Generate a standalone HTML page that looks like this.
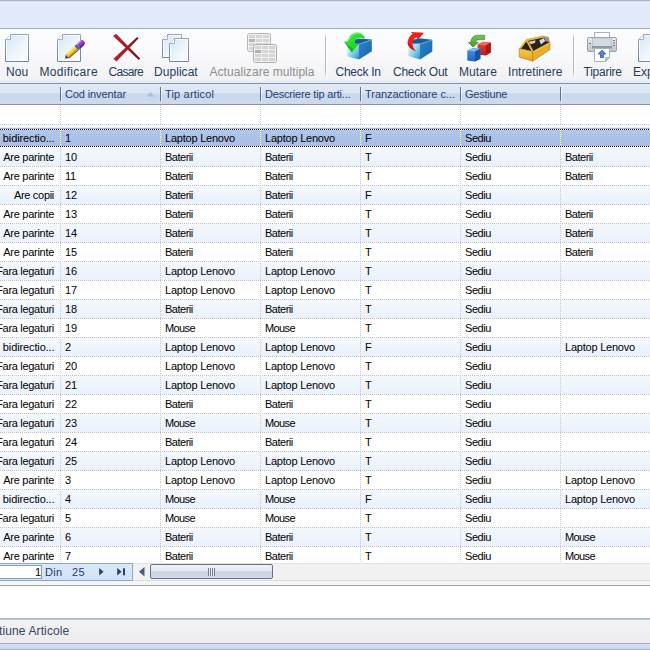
<!DOCTYPE html>
<html><head><meta charset="utf-8"><title>Gestiune Articole</title>
<style>
html,body{margin:0;padding:0;background:#fff;}
body{width:650px;height:650px;overflow:hidden;position:relative;font-family:"Liberation Sans",sans-serif;}
#app{position:absolute;left:0;top:0;width:650px;height:650px;overflow:hidden;background:#fff;}
.abs{position:absolute;}
/* top caption band */
#cap{left:0;top:0;width:650px;height:28px;background:linear-gradient(#a9b6ca 0,#a9b6ca 1px,#d0dcee 1px,#d0dcee 2px,#eaf0fa 2px,#eaf0fa 3px,#e4ecf9 3px,#e1eaf8 5px,#e1eaf8 24px,#e3ebf8 28px);}
#capb{left:0;top:28px;width:650px;height:1px;background:#a3abb9;}
/* toolbar */
#tb{left:0;top:29px;width:650px;height:54px;background:linear-gradient(#fbfcfe 0,#fafafc 20px,#f1f2f4 50px,#eaeef4 52px,#e3e9f2 54px);}
.tsep{top:33px;width:1px;height:45px;background:linear-gradient(rgba(160,164,172,0),#b2b6bd 6px,#b2b6bd 38px,rgba(160,164,172,0));}
.tsep2{top:33px;width:1px;height:45px;background:rgba(255,255,255,.9);}
.tl{position:absolute;top:64px;height:16px;line-height:16px;font-size:12px;color:#2a3a5c;white-space:pre;}
.tl.dis{color:#8d8d8d;}
.ic{position:absolute;overflow:visible;}
/* header */
#hd{left:0;top:83px;width:650px;height:22px;box-sizing:border-box;border-top:1px solid #8493a8;border-bottom:1px solid #8493a8;background:linear-gradient(#e1eaf7 0,#d9e4f4 9px,#c9d7ec 10px,#cddaee 20px);}
.hs{top:87px;width:1px;height:14px;background:#61728f;}
.hs2{top:87px;width:1px;height:14px;background:rgba(255,255,255,.55);}
.ht{position:absolute;top:86px;height:16px;line-height:16px;font-size:11px;color:#24406e;white-space:pre;}
/* grid */
#filt{left:0;top:105px;width:650px;height:19px;background:#fff;}
.hdot{height:1px;background-image:repeating-linear-gradient(to right,#bfbfbf 0,#bfbfbf 1px,rgba(255,255,255,0) 1px,rgba(255,255,255,0) 2px);}
.vdot{width:1px;background-image:repeating-linear-gradient(to bottom,#c9c9c9 0,#c9c9c9 1px,rgba(255,255,255,0) 1px,rgba(255,255,255,0) 2px);}
.row{position:absolute;left:0;width:650px;height:18px;background:#fff;}
.row.alt{background:linear-gradient(#f4f8fd,#eaf1fb);}
.row.sel{background:linear-gradient(#b2c6ea,#a7bde5);}
.c{position:absolute;top:1px;height:16px;line-height:16px;font-size:11px;color:#000;white-space:pre;}
.c.r{text-align:right;}
.fdot{position:absolute;left:0;width:650px;height:1px;background-image:repeating-linear-gradient(to right,#000 0,#000 1px,#fff 1px,#fff 2px);}
</style></head><body><div id="app">

<div id="cap" class="abs"></div><div id="capb" class="abs"></div><div id="tb" class="abs"></div>
<div class="abs tsep" style="left:325px"></div><div class="abs tsep2" style="left:326px"></div>
<div class="abs tsep" style="left:573px"></div><div class="abs tsep2" style="left:574px"></div>
<span class="tl" style="left:6px;letter-spacing:0.05px">Nou</span>
<span class="tl" style="left:39.5px;letter-spacing:0.3px">Modificare</span>
<span class="tl" style="left:108.5px;letter-spacing:-0.7px">Casare</span>
<span class="tl" style="left:154px;letter-spacing:0.05px">Duplicat</span>
<span class="tl dis" style="left:209.5px;letter-spacing:0.05px">Actualizare multipla</span>
<span class="tl" style="left:335.5px;letter-spacing:-0.27px">Check In</span>
<span class="tl" style="left:393px;letter-spacing:-0.25px">Check Out</span>
<span class="tl" style="left:459px;letter-spacing:0.1px">Mutare</span>
<span class="tl" style="left:508px;letter-spacing:0.05px">Intretinere</span>
<span class="tl" style="left:583.5px;letter-spacing:-0.25px">Tiparire</span>
<span class="tl" style="left:633px;letter-spacing:0px">Export</span>
<svg class="ic" style="left:0;top:29px" width="650" height="54" viewBox="0 29 650 54">
<defs>
<linearGradient id="pg" x1="0" y1="0" x2="1" y2="1"><stop offset="0" stop-color="#d3e4f6"/><stop offset=".55" stop-color="#eef5fc"/><stop offset="1" stop-color="#fdfeff"/></linearGradient>
<linearGradient id="pgs" x1="0" y1="0" x2="0" y2="1"><stop offset="0" stop-color="#98a5b5"/><stop offset="1" stop-color="#74849a"/></linearGradient>
<linearGradient id="boxl" x1="0" y1="0" x2="1" y2="1"><stop offset="0" stop-color="#e9fbff"/><stop offset=".5" stop-color="#8fd6ee"/><stop offset="1" stop-color="#2b8fc6"/></linearGradient>
<linearGradient id="boxr" x1="0" y1="0" x2="1" y2="1"><stop offset="0" stop-color="#2f86cc"/><stop offset="1" stop-color="#1562a6"/></linearGradient>
<linearGradient id="boxt" x1="0" y1="0" x2="0" y2="1"><stop offset="0" stop-color="#1d62a8"/><stop offset="1" stop-color="#134f90"/></linearGradient>
<linearGradient id="grn" x1="0" y1="0" x2="1" y2="1"><stop offset="0" stop-color="#3ff03f"/><stop offset="1" stop-color="#12c41c"/></linearGradient>
<linearGradient id="grn2" x1="0" y1="0" x2="0" y2="1"><stop offset="0" stop-color="#7bc65a"/><stop offset="1" stop-color="#3d9a2a"/></linearGradient>
<linearGradient id="red" x1="0" y1="0" x2="1" y2="1"><stop offset="0" stop-color="#ff2a1a"/><stop offset="1" stop-color="#d40808"/></linearGradient>
<linearGradient id="cb" x1="0" y1="0" x2="0" y2="1"><stop offset="0" stop-color="#4d97e6"/><stop offset="1" stop-color="#1f63bd"/></linearGradient>
<linearGradient id="cr" x1="0" y1="0" x2="0" y2="1"><stop offset="0" stop-color="#e8493c"/><stop offset="1" stop-color="#b8201a"/></linearGradient>
<linearGradient id="yl" x1="0" y1="0" x2="0" y2="1"><stop offset="0" stop-color="#f8cf4c"/><stop offset="1" stop-color="#e2a21c"/></linearGradient>
<linearGradient id="pr" x1="0" y1="0" x2="0" y2="1"><stop offset="0" stop-color="#eceff3"/><stop offset=".5" stop-color="#cfd5dc"/><stop offset="1" stop-color="#bec6cf"/></linearGradient>
<linearGradient id="gg" x1="0" y1="0" x2="0" y2="1"><stop offset="0" stop-color="#ebebeb"/><stop offset="1" stop-color="#dcdcdc"/></linearGradient>


</defs>
<!-- Nou -->
<g transform="translate(5,34)"><path d="M5.5 0.5 H23.5 V27.5 H0.5 V5.5 Z" fill="url(#pg)" stroke="url(#pgs)" stroke-width="1"/><path d="M6.2 1.5 H22.5 V26.5 H1.5 V6.2" fill="none" stroke="#fff" stroke-opacity=".75" stroke-width="1"/><path d="M0.5 5.5 H5.5 V0.5" fill="#fbfdff" stroke="#a3afbd" stroke-width="1"/></g>
<!-- Modificare -->
<g transform="translate(57,34)"><path d="M5.5 0.5 H23.5 V27.5 H0.5 V5.5 Z" fill="url(#pg)" stroke="url(#pgs)" stroke-width="1"/><path d="M6.2 1.5 H22.5 V26.5 H1.5 V6.2" fill="none" stroke="#fff" stroke-opacity=".75" stroke-width="1"/><path d="M0.5 5.5 H5.5 V0.5" fill="#fbfdff" stroke="#a3afbd" stroke-width="1"/></g>
<g transform="translate(65.3,58.2) rotate(-42.6)">
 <path d="M0 0 L3.2 -2.2 L3.2 2.2 Z" fill="#4e4428"/>
 <path d="M2.6 -2 L4.5 -2.7 H15 V2.7 H4.5 L2.6 2 Z" fill="#f2cd38"/>
 <path d="M2.6 0.8 H15 V2.7 H4.5 L2.6 2 Z" fill="#c4951a"/>
 <path d="M4 -2.7 H15 V-1.5 H4 Z" fill="#fcec98"/>
 <path d="M15 -2.7 H17.8 V2.7 H15 Z" fill="#4f5fb0"/>
 <path d="M17.8 -2.7 H22.6 A2.7 2.7 0 0 1 22.6 2.7 H17.8 Z" fill="#9c3cc6"/>
 <path d="M17.8 -2.7 H22.6 A2.7 2.7 0 0 1 24.6 -1.5 H17.8 Z" fill="#d88cf0"/>
 <path d="M17.8 1 H25.1 A2.7 2.7 0 0 1 22.6 2.7 H17.8 Z" fill="#642888"/>
 <path d="M0 0 L3.2 2.3 L15 2.9 L22.6 2.9" fill="none" stroke="#2e2a44" stroke-width=".8" opacity=".75"/>
 <path d="M0 0 L3.2 -2.3" fill="none" stroke="#2e2a44" stroke-width=".6" opacity=".6"/>
</g>
<!-- Casare -->
<linearGradient id="x1" gradientUnits="userSpaceOnUse" x1="114" y1="35" x2="139" y2="59"><stop offset="0" stop-color="#b52430"/><stop offset=".55" stop-color="#a01c28"/><stop offset="1" stop-color="#5e141c"/></linearGradient>
<linearGradient id="x2" gradientUnits="userSpaceOnUse" x1="115" y1="60" x2="138" y2="37.5"><stop offset="0" stop-color="#b52430"/><stop offset=".55" stop-color="#a01c28"/><stop offset="1" stop-color="#5e141c"/></linearGradient>
<path d="M113 36 L116.1 33.7 L140.1 58.6 L138.8 60 Z" fill="url(#x1)"/>
<path d="M113.4 58.7 L116.5 61.5 L138.6 38.3 L137.2 37 Z" fill="url(#x2)"/>
<!-- Duplicat -->
<g transform="translate(162,34)"><path d="M5.5 0.5 H19.5 V23.5 H0.5 V5.5 Z" fill="url(#pg)" stroke="url(#pgs)" stroke-width="1"/><path d="M6.2 1.5 H18.5 V22.5 H1.5 V6.2" fill="none" stroke="#fff" stroke-opacity=".75" stroke-width="1"/><path d="M0.5 5.5 H5.5 V0.5" fill="#fbfdff" stroke="#a3afbd" stroke-width="1"/></g>
<g transform="translate(169,38)"><path d="M5.5 0.5 H19.5 V23.5 H0.5 V5.5 Z" fill="url(#pg)" stroke="url(#pgs)" stroke-width="1"/><path d="M6.2 1.5 H18.5 V22.5 H1.5 V6.2" fill="none" stroke="#fff" stroke-opacity=".75" stroke-width="1"/><path d="M0.5 5.5 H5.5 V0.5" fill="#fbfdff" stroke="#a3afbd" stroke-width="1"/></g>
<!-- Actualizare multipla (disabled) -->
<g>
<rect x="247.5" y="33.5" width="23" height="18" rx="2" fill="#f2f2f2" stroke="#b5b5b5"/>
<g fill="#d6d6d6"><rect x="249" y="35" width="6" height="3"/><rect x="256" y="35" width="6" height="3"/><rect x="263" y="35" width="6" height="3"/>
<rect x="256" y="39" width="6" height="3"/><rect x="263" y="39" width="6" height="3"/>
<rect x="249" y="43" width="6" height="3"/><rect x="256" y="43" width="6" height="3"/><rect x="263" y="43" width="6" height="3"/>
<rect x="249" y="47" width="6" height="3"/><rect x="256" y="47" width="6" height="3"/><rect x="263" y="47" width="6" height="3"/></g>
<rect x="249" y="39" width="6" height="3" fill="#b4b4b4"/>
<rect x="253.5" y="44.5" width="23" height="18" rx="2" fill="#f2f2f2" stroke="#adadad"/>
<g fill="#d4d4d4"><rect x="255" y="46" width="6" height="3"/><rect x="262" y="46" width="6" height="3"/><rect x="269" y="46" width="6" height="3"/>
<rect x="262" y="50" width="6" height="3"/><rect x="269" y="50" width="6" height="3"/>
<rect x="255" y="54" width="6" height="3"/><rect x="262" y="54" width="6" height="3"/><rect x="269" y="54" width="6" height="3"/>
<rect x="255" y="58" width="6" height="3"/><rect x="262" y="58" width="6" height="3"/><rect x="269" y="58" width="6" height="3"/></g>
<rect x="255" y="50" width="6" height="3" fill="#b0b0b0"/>
</g>
<!-- Check In -->
<g>
<path d="M347.2 44.5 L359 43.8 L359 59.4 L347.6 56.4 Z" fill="url(#boxl)"/>
<path d="M359 43.8 L371.8 39.6 L371.8 51.2 L359 59.4 Z" fill="url(#boxr)"/>
<path d="M347.2 44.5 L353.5 40.3 L358.5 38.6 L371.8 39.6 L359 43.8 Z" fill="url(#boxt)"/>
<path d="M359.3 44.2 L371.5 40.2" stroke="#5aaae4" stroke-width=".8" fill="none"/>
<path d="M364.6 37 C363 33.5 359.5 32.2 356.5 32.5 C351.5 33 348.5 37 347.8 41.2 L344 41.8 L352 52.4 L358.4 44.6 L354.6 42.6 C355.2 40 356.5 38.2 358.6 37.9 C361 37.7 363 38.2 364.6 38.9 Z" fill="url(#grn)"/>
<path d="M344 41.8 L352 52.4 L352.8 49 Z" fill="#0c8a18" opacity=".55"/>
<path d="M363.8 36.2 C362 33.8 359.5 33 356.8 33.2 C353 33.6 350.2 36.5 349 40" stroke="#9cff8c" stroke-width=".9" fill="none" opacity=".8"/>
</g>
<!-- Check Out -->
<g>
<path d="M408.3 43.8 L420 43.5 L420 59.4 L408.5 56 Z" fill="url(#boxl)"/>
<path d="M420 43.5 L432.3 39.7 L432.3 51.6 L420 59.4 Z" fill="url(#boxr)"/>
<path d="M408.3 43.8 L414 39.6 L419.5 38.2 L432.3 39.7 L420 43.5 Z" fill="url(#boxt)"/>
<path d="M420.3 44 L432 40.3" stroke="#5aaae4" stroke-width=".8" fill="none"/>
<path d="M415.6 51.2 C410 49 407.2 45.5 407.8 41.5 C408.3 38 410 35.5 412.6 34 L410.8 32.1 L424 32.7 L418 39.6 L416.3 37.2 C414 38.5 412.6 40.5 412.6 43.5 C412.6 46.5 414 49 415.6 51.2 Z" fill="url(#red)"/>
<path d="M415.6 51.2 C410 49 407.2 45.5 407.8 41.5 C409 45 411.5 48.5 415.6 51.2 Z" fill="#8a0a0a" opacity=".5"/>
</g>
<!-- Mutare -->
<g>
<path d="M477.5 44.5 L483 41.8 L490.8 42.5 L490.8 52.5 L485.5 55.5 L477.5 54.5 Z" fill="url(#cr)"/>
<path d="M477.5 44.5 L483 41.8 L490.8 42.5 L485.5 45.5 Z" fill="#f26a58"/>
<path d="M485.5 45.5 L490.8 42.5 L490.8 52.5 L485.5 55.5 Z" fill="#a81a16"/>
<path d="M467.3 50.5 L473 48 L480.4 48.8 L480.4 58.8 L475 61.6 L467.3 60.5 Z" fill="url(#cb)"/>
<path d="M467.3 50.5 L473 48 L480.4 48.8 L475 51.6 Z" fill="#7db8f4"/>
<path d="M475 51.6 L480.4 48.8 L480.4 58.8 L475 61.6 Z" fill="#1854a6"/>
<path d="M484.6 35.2 L484.6 39.6 L478 39.8 C476.5 40 476 41 475.9 42.5 L478.3 42.5 L473 47 L468.3 42.5 L470.8 42.5 C471 38.5 473 35.6 477.5 35.3 Z" fill="url(#grn2)" stroke="#2e7a22" stroke-width=".6"/>
</g>
<!-- Intretinere (toolbox) -->
<g>
<path d="M519.6 48.6 L526.5 40 L543.5 36.4 L550 42.2 L532.7 51.5 Z" fill="#2c2216"/>
<path d="M528.5 41.8 L535.5 40.2 L535 43 L530.5 44.2 Z" fill="#f2ecdf" opacity=".85"/>
<path d="M539.3 40.4 L543.6 38 L545.2 41 L541 44.6 Z" fill="#d4d8e2"/>
<path d="M544 36 L548.6 37 L549.6 41 L545.6 41.4 Z" fill="#8f95a6"/>
<path d="M519.2 48.5 L532.7 51.5 L532.7 61.2 L519.2 57 Z" fill="url(#yl)" stroke="#a87a18" stroke-width=".6"/>
<path d="M532.7 51.5 L550 42.2 L550 49.5 L532.7 61.2 Z" fill="#e9ae22" stroke="#a87a18" stroke-width=".6"/>
<path d="M533.2 52.2 L549.6 43.2" stroke="#f6d46a" stroke-width=".8" fill="none"/>
<path d="M520.3 48.3 L526.5 40 L532.5 51" fill="none" stroke="#e8bc44" stroke-width="1.7" stroke-linejoin="round"/>
<path d="M526.5 40.1 L543.5 36.5" fill="none" stroke="#dfb24a" stroke-width="2.2"/>
<path d="M543.5 36.5 L549.6 42.4" fill="none" stroke="#c9952a" stroke-width="1.4"/>
</g>
<!-- Tiparire (printer) -->
<g>
<rect x="594.5" y="32.5" width="15" height="6" fill="#fbfcfd" stroke="#a9b1bb"/>
<rect x="587.5" y="37.5" width="29" height="14" rx="1.5" fill="url(#pr)" stroke="#98a2ae"/>
<rect x="592.5" y="38" width="19" height="9" fill="#d5dae0" stroke="#aab2bc" stroke-width=".6"/>
<rect x="592" y="46" width="20" height="2.5" fill="#8f99a6"/>
<rect x="613" y="40" width="2" height="1" fill="#6f7986"/><rect x="613" y="42.5" width="2" height="1" fill="#6f7986"/><rect x="613" y="45" width="2" height="1" fill="#6f7986"/>
<rect x="589" y="43" width="2" height="1" fill="#6f7986"/>
<path d="M594.5 48.5 H609.5 V57.5 L605.5 61.5 H594.5 Z" fill="#fcfdff" stroke="#a9b1bb"/>
<path d="M609.5 57.5 L605.5 61.5 L605.5 57.5 Z" fill="#b8bfc9" stroke="#98a2ae" stroke-width=".6"/>
<path d="M602 50.2 L605.8 54 H603.5 V57.6 H600.5 V54 H598.2 Z" fill="#5a86dc" stroke="#2d52a8" stroke-width=".8"/>
</g>
<!-- Export -->
<g transform="translate(638,34)"><path d="M5.5 0.5 H23.5 V27.5 H0.5 V5.5 Z" fill="url(#pg)" stroke="url(#pgs)" stroke-width="1"/><path d="M6.2 1.5 H22.5 V26.5 H1.5 V6.2" fill="none" stroke="#fff" stroke-opacity=".75" stroke-width="1"/><path d="M0.5 5.5 H5.5 V0.5" fill="#fbfdff" stroke="#a3afbd" stroke-width="1"/></g>
</svg>

<div id="hd" class="abs"></div>
<div class="abs hs" style="left:60px"></div><div class="abs hs2" style="left:61px"></div>
<div class="abs hs" style="left:160px"></div><div class="abs hs2" style="left:161px"></div>
<div class="abs hs" style="left:260px"></div><div class="abs hs2" style="left:261px"></div>
<div class="abs hs" style="left:360px"></div><div class="abs hs2" style="left:361px"></div>
<div class="abs hs" style="left:460px"></div><div class="abs hs2" style="left:461px"></div>
<div class="abs hs" style="left:560px"></div><div class="abs hs2" style="left:561px"></div>
<span class="ht" style="left:65px;letter-spacing:-0.12px">Cod inventar</span>
<span class="ht" style="left:165px;letter-spacing:0.17px">Tip articol</span>
<span class="ht" style="left:265px;letter-spacing:-0.18px">Descriere tip arti...</span>
<span class="ht" style="left:365px;letter-spacing:-0.04px">Tranzactionare c...</span>
<span class="ht" style="left:465px;letter-spacing:-0.22px">Gestiune</span>
<svg class="ic" style="left:146px;top:91px" width="9" height="6" viewBox="0 0 9 6"><path d="M0.5 5.5 L4.5 1 L8.5 5.5 Z" fill="#a9bedd"/></svg>
<div id="filt" class="abs"></div>
<div class="abs hdot" style="left:0;top:124px;width:650px"></div>
<div class="abs" style="left:0;top:125px;width:650px;height:3px;background:linear-gradient(#fbfcfe,#e4ebf7)"></div>
<div class="abs" style="left:0;top:128px;width:650px;height:1px;background:#a0b5db"></div>
<div class="row sel" style="top:129px"><span class="c" style="right:595.5px;letter-spacing:-0.12px">bidirectio...</span><span class="c" style="left:65px;letter-spacing:-0.2px">1</span><span class="c" style="left:165px;letter-spacing:-0.22px">Laptop Lenovo</span><span class="c" style="left:265px;letter-spacing:-0.22px">Laptop Lenovo</span><span class="c" style="left:365px;letter-spacing:-0.2px">F</span><span class="c" style="left:465px;letter-spacing:-0.45px">Sediu</span></div>
<div class="row alt" style="top:148px"><span class="c" style="right:596px;letter-spacing:-0.28px">Are parinte</span><span class="c" style="left:65px;letter-spacing:-0.2px">10</span><span class="c" style="left:165px;letter-spacing:-0.5px">Baterii</span><span class="c" style="left:265px;letter-spacing:-0.5px">Baterii</span><span class="c" style="left:365px;letter-spacing:-0.2px">T</span><span class="c" style="left:465px;letter-spacing:-0.45px">Sediu</span><span class="c" style="left:565px;letter-spacing:-0.5px">Baterii</span></div>
<div class="abs hdot" style="left:0;top:166px;width:650px"></div>
<div class="row" style="top:167px"><span class="c" style="right:596px;letter-spacing:-0.28px">Are parinte</span><span class="c" style="left:65px;letter-spacing:-0.2px">11</span><span class="c" style="left:165px;letter-spacing:-0.5px">Baterii</span><span class="c" style="left:265px;letter-spacing:-0.5px">Baterii</span><span class="c" style="left:365px;letter-spacing:-0.2px">T</span><span class="c" style="left:465px;letter-spacing:-0.45px">Sediu</span><span class="c" style="left:565px;letter-spacing:-0.5px">Baterii</span></div>
<div class="abs hdot" style="left:0;top:185px;width:650px"></div>
<div class="row alt" style="top:186px"><span class="c" style="right:596px;letter-spacing:-0.3px">Are copii</span><span class="c" style="left:65px;letter-spacing:-0.2px">12</span><span class="c" style="left:165px;letter-spacing:-0.5px">Baterii</span><span class="c" style="left:265px;letter-spacing:-0.5px">Baterii</span><span class="c" style="left:365px;letter-spacing:-0.2px">F</span><span class="c" style="left:465px;letter-spacing:-0.45px">Sediu</span></div>
<div class="abs hdot" style="left:0;top:204px;width:650px"></div>
<div class="row" style="top:205px"><span class="c" style="right:596px;letter-spacing:-0.28px">Are parinte</span><span class="c" style="left:65px;letter-spacing:-0.2px">13</span><span class="c" style="left:165px;letter-spacing:-0.5px">Baterii</span><span class="c" style="left:265px;letter-spacing:-0.5px">Baterii</span><span class="c" style="left:365px;letter-spacing:-0.2px">T</span><span class="c" style="left:465px;letter-spacing:-0.45px">Sediu</span><span class="c" style="left:565px;letter-spacing:-0.5px">Baterii</span></div>
<div class="abs hdot" style="left:0;top:223px;width:650px"></div>
<div class="row alt" style="top:224px"><span class="c" style="right:596px;letter-spacing:-0.28px">Are parinte</span><span class="c" style="left:65px;letter-spacing:-0.2px">14</span><span class="c" style="left:165px;letter-spacing:-0.5px">Baterii</span><span class="c" style="left:265px;letter-spacing:-0.5px">Baterii</span><span class="c" style="left:365px;letter-spacing:-0.2px">T</span><span class="c" style="left:465px;letter-spacing:-0.45px">Sediu</span><span class="c" style="left:565px;letter-spacing:-0.5px">Baterii</span></div>
<div class="abs hdot" style="left:0;top:242px;width:650px"></div>
<div class="row" style="top:243px"><span class="c" style="right:596px;letter-spacing:-0.28px">Are parinte</span><span class="c" style="left:65px;letter-spacing:-0.2px">15</span><span class="c" style="left:165px;letter-spacing:-0.5px">Baterii</span><span class="c" style="left:265px;letter-spacing:-0.5px">Baterii</span><span class="c" style="left:365px;letter-spacing:-0.2px">T</span><span class="c" style="left:465px;letter-spacing:-0.45px">Sediu</span><span class="c" style="left:565px;letter-spacing:-0.5px">Baterii</span></div>
<div class="abs hdot" style="left:0;top:261px;width:650px"></div>
<div class="row alt" style="top:262px"><span class="c" style="right:596px;letter-spacing:-0.3px">Fara legaturi</span><span class="c" style="left:65px;letter-spacing:-0.2px">16</span><span class="c" style="left:165px;letter-spacing:-0.22px">Laptop Lenovo</span><span class="c" style="left:265px;letter-spacing:-0.22px">Laptop Lenovo</span><span class="c" style="left:365px;letter-spacing:-0.2px">T</span><span class="c" style="left:465px;letter-spacing:-0.45px">Sediu</span></div>
<div class="abs hdot" style="left:0;top:280px;width:650px"></div>
<div class="row" style="top:281px"><span class="c" style="right:596px;letter-spacing:-0.3px">Fara legaturi</span><span class="c" style="left:65px;letter-spacing:-0.2px">17</span><span class="c" style="left:165px;letter-spacing:-0.22px">Laptop Lenovo</span><span class="c" style="left:265px;letter-spacing:-0.22px">Laptop Lenovo</span><span class="c" style="left:365px;letter-spacing:-0.2px">T</span><span class="c" style="left:465px;letter-spacing:-0.45px">Sediu</span></div>
<div class="abs hdot" style="left:0;top:299px;width:650px"></div>
<div class="row alt" style="top:300px"><span class="c" style="right:596px;letter-spacing:-0.3px">Fara legaturi</span><span class="c" style="left:65px;letter-spacing:-0.2px">18</span><span class="c" style="left:165px;letter-spacing:-0.5px">Baterii</span><span class="c" style="left:265px;letter-spacing:-0.5px">Baterii</span><span class="c" style="left:365px;letter-spacing:-0.2px">T</span><span class="c" style="left:465px;letter-spacing:-0.45px">Sediu</span></div>
<div class="abs hdot" style="left:0;top:318px;width:650px"></div>
<div class="row" style="top:319px"><span class="c" style="right:596px;letter-spacing:-0.3px">Fara legaturi</span><span class="c" style="left:65px;letter-spacing:-0.2px">19</span><span class="c" style="left:165px;letter-spacing:-0.6px">Mouse</span><span class="c" style="left:265px;letter-spacing:-0.6px">Mouse</span><span class="c" style="left:365px;letter-spacing:-0.2px">T</span><span class="c" style="left:465px;letter-spacing:-0.45px">Sediu</span></div>
<div class="abs hdot" style="left:0;top:337px;width:650px"></div>
<div class="row alt" style="top:338px"><span class="c" style="right:595.5px;letter-spacing:-0.12px">bidirectio...</span><span class="c" style="left:65px;letter-spacing:-0.2px">2</span><span class="c" style="left:165px;letter-spacing:-0.22px">Laptop Lenovo</span><span class="c" style="left:265px;letter-spacing:-0.22px">Laptop Lenovo</span><span class="c" style="left:365px;letter-spacing:-0.2px">F</span><span class="c" style="left:465px;letter-spacing:-0.45px">Sediu</span><span class="c" style="left:565px;letter-spacing:-0.22px">Laptop Lenovo</span></div>
<div class="abs hdot" style="left:0;top:356px;width:650px"></div>
<div class="row" style="top:357px"><span class="c" style="right:596px;letter-spacing:-0.3px">Fara legaturi</span><span class="c" style="left:65px;letter-spacing:-0.2px">20</span><span class="c" style="left:165px;letter-spacing:-0.22px">Laptop Lenovo</span><span class="c" style="left:265px;letter-spacing:-0.22px">Laptop Lenovo</span><span class="c" style="left:365px;letter-spacing:-0.2px">T</span><span class="c" style="left:465px;letter-spacing:-0.45px">Sediu</span></div>
<div class="abs hdot" style="left:0;top:375px;width:650px"></div>
<div class="row alt" style="top:376px"><span class="c" style="right:596px;letter-spacing:-0.3px">Fara legaturi</span><span class="c" style="left:65px;letter-spacing:-0.2px">21</span><span class="c" style="left:165px;letter-spacing:-0.22px">Laptop Lenovo</span><span class="c" style="left:265px;letter-spacing:-0.22px">Laptop Lenovo</span><span class="c" style="left:365px;letter-spacing:-0.2px">T</span><span class="c" style="left:465px;letter-spacing:-0.45px">Sediu</span></div>
<div class="abs hdot" style="left:0;top:394px;width:650px"></div>
<div class="row" style="top:395px"><span class="c" style="right:596px;letter-spacing:-0.3px">Fara legaturi</span><span class="c" style="left:65px;letter-spacing:-0.2px">22</span><span class="c" style="left:165px;letter-spacing:-0.5px">Baterii</span><span class="c" style="left:265px;letter-spacing:-0.5px">Baterii</span><span class="c" style="left:365px;letter-spacing:-0.2px">T</span><span class="c" style="left:465px;letter-spacing:-0.45px">Sediu</span></div>
<div class="abs hdot" style="left:0;top:413px;width:650px"></div>
<div class="row alt" style="top:414px"><span class="c" style="right:596px;letter-spacing:-0.3px">Fara legaturi</span><span class="c" style="left:65px;letter-spacing:-0.2px">23</span><span class="c" style="left:165px;letter-spacing:-0.6px">Mouse</span><span class="c" style="left:265px;letter-spacing:-0.6px">Mouse</span><span class="c" style="left:365px;letter-spacing:-0.2px">T</span><span class="c" style="left:465px;letter-spacing:-0.45px">Sediu</span></div>
<div class="abs hdot" style="left:0;top:432px;width:650px"></div>
<div class="row" style="top:433px"><span class="c" style="right:596px;letter-spacing:-0.3px">Fara legaturi</span><span class="c" style="left:65px;letter-spacing:-0.2px">24</span><span class="c" style="left:165px;letter-spacing:-0.5px">Baterii</span><span class="c" style="left:265px;letter-spacing:-0.5px">Baterii</span><span class="c" style="left:365px;letter-spacing:-0.2px">T</span><span class="c" style="left:465px;letter-spacing:-0.45px">Sediu</span></div>
<div class="abs hdot" style="left:0;top:451px;width:650px"></div>
<div class="row alt" style="top:452px"><span class="c" style="right:596px;letter-spacing:-0.3px">Fara legaturi</span><span class="c" style="left:65px;letter-spacing:-0.2px">25</span><span class="c" style="left:165px;letter-spacing:-0.22px">Laptop Lenovo</span><span class="c" style="left:265px;letter-spacing:-0.22px">Laptop Lenovo</span><span class="c" style="left:365px;letter-spacing:-0.2px">T</span><span class="c" style="left:465px;letter-spacing:-0.45px">Sediu</span></div>
<div class="abs hdot" style="left:0;top:470px;width:650px"></div>
<div class="row" style="top:471px"><span class="c" style="right:596px;letter-spacing:-0.28px">Are parinte</span><span class="c" style="left:65px;letter-spacing:-0.2px">3</span><span class="c" style="left:165px;letter-spacing:-0.22px">Laptop Lenovo</span><span class="c" style="left:265px;letter-spacing:-0.22px">Laptop Lenovo</span><span class="c" style="left:365px;letter-spacing:-0.2px">T</span><span class="c" style="left:465px;letter-spacing:-0.45px">Sediu</span><span class="c" style="left:565px;letter-spacing:-0.22px">Laptop Lenovo</span></div>
<div class="abs hdot" style="left:0;top:489px;width:650px"></div>
<div class="row alt" style="top:490px"><span class="c" style="right:595.5px;letter-spacing:-0.12px">bidirectio...</span><span class="c" style="left:65px;letter-spacing:-0.2px">4</span><span class="c" style="left:165px;letter-spacing:-0.6px">Mouse</span><span class="c" style="left:265px;letter-spacing:-0.6px">Mouse</span><span class="c" style="left:365px;letter-spacing:-0.2px">F</span><span class="c" style="left:465px;letter-spacing:-0.45px">Sediu</span><span class="c" style="left:565px;letter-spacing:-0.22px">Laptop Lenovo</span></div>
<div class="abs hdot" style="left:0;top:508px;width:650px"></div>
<div class="row" style="top:509px"><span class="c" style="right:596px;letter-spacing:-0.3px">Fara legaturi</span><span class="c" style="left:65px;letter-spacing:-0.2px">5</span><span class="c" style="left:165px;letter-spacing:-0.6px">Mouse</span><span class="c" style="left:265px;letter-spacing:-0.6px">Mouse</span><span class="c" style="left:365px;letter-spacing:-0.2px">T</span><span class="c" style="left:465px;letter-spacing:-0.45px">Sediu</span></div>
<div class="abs hdot" style="left:0;top:527px;width:650px"></div>
<div class="row alt" style="top:528px"><span class="c" style="right:596px;letter-spacing:-0.28px">Are parinte</span><span class="c" style="left:65px;letter-spacing:-0.2px">6</span><span class="c" style="left:165px;letter-spacing:-0.5px">Baterii</span><span class="c" style="left:265px;letter-spacing:-0.5px">Baterii</span><span class="c" style="left:365px;letter-spacing:-0.2px">T</span><span class="c" style="left:465px;letter-spacing:-0.45px">Sediu</span><span class="c" style="left:565px;letter-spacing:-0.6px">Mouse</span></div>
<div class="abs hdot" style="left:0;top:546px;width:650px"></div>
<div class="row" style="top:547px"><span class="c" style="right:596px;letter-spacing:-0.28px">Are parinte</span><span class="c" style="left:65px;letter-spacing:-0.2px">7</span><span class="c" style="left:165px;letter-spacing:-0.5px">Baterii</span><span class="c" style="left:265px;letter-spacing:-0.5px">Baterii</span><span class="c" style="left:365px;letter-spacing:-0.2px">T</span><span class="c" style="left:465px;letter-spacing:-0.45px">Sediu</span><span class="c" style="left:565px;letter-spacing:-0.6px">Mouse</span></div>
<div class="abs hdot" style="left:0;top:565px;width:650px"></div>
<div class="fdot" style="top:129px"></div><div class="fdot" style="top:146px"></div>
<div class="abs vdot" style="left:60px;top:105px;height:19px"></div>
<div class="abs vdot" style="left:60px;top:147px;height:418px"></div>
<div class="abs vdot" style="left:60px;top:130px;height:16px;background-image:repeating-linear-gradient(to bottom,#fff 0,#fff 1px,rgba(255,255,255,0) 1px,rgba(255,255,255,0) 2px)"></div>
<div class="abs vdot" style="left:160px;top:105px;height:19px"></div>
<div class="abs vdot" style="left:160px;top:147px;height:418px"></div>
<div class="abs vdot" style="left:160px;top:130px;height:16px;background-image:repeating-linear-gradient(to bottom,#fff 0,#fff 1px,rgba(255,255,255,0) 1px,rgba(255,255,255,0) 2px)"></div>
<div class="abs vdot" style="left:260px;top:105px;height:19px"></div>
<div class="abs vdot" style="left:260px;top:147px;height:418px"></div>
<div class="abs vdot" style="left:260px;top:130px;height:16px;background-image:repeating-linear-gradient(to bottom,#fff 0,#fff 1px,rgba(255,255,255,0) 1px,rgba(255,255,255,0) 2px)"></div>
<div class="abs vdot" style="left:360px;top:105px;height:19px"></div>
<div class="abs vdot" style="left:360px;top:147px;height:418px"></div>
<div class="abs vdot" style="left:360px;top:130px;height:16px;background-image:repeating-linear-gradient(to bottom,#fff 0,#fff 1px,rgba(255,255,255,0) 1px,rgba(255,255,255,0) 2px)"></div>
<div class="abs vdot" style="left:460px;top:105px;height:19px"></div>
<div class="abs vdot" style="left:460px;top:147px;height:418px"></div>
<div class="abs vdot" style="left:460px;top:130px;height:16px;background-image:repeating-linear-gradient(to bottom,#fff 0,#fff 1px,rgba(255,255,255,0) 1px,rgba(255,255,255,0) 2px)"></div>
<div class="abs vdot" style="left:560px;top:105px;height:19px"></div>
<div class="abs vdot" style="left:560px;top:147px;height:418px"></div>
<div class="abs vdot" style="left:560px;top:130px;height:16px;background-image:repeating-linear-gradient(to bottom,#fff 0,#fff 1px,rgba(255,255,255,0) 1px,rgba(255,255,255,0) 2px)"></div>
<!-- bottom: navigator + scrollbar -->
<div class="abs" style="left:0;top:563px;width:650px;height:18px;background:#f1f1f1"></div>
<div class="abs" style="left:133px;top:563px;width:517px;height:1px;background:#e3e3e3"></div>
<div class="abs" style="left:133px;top:580px;width:517px;height:1px;background:#dcdcdc"></div>
<div class="abs" style="left:0;top:563px;width:133px;height:18px;box-sizing:border-box;border:1px solid #8da6cb;border-left:none;background:linear-gradient(#dce8f9,#d2e1f6)"></div>
<div class="abs" style="left:-2px;top:565px;width:44px;height:14px;box-sizing:border-box;border:1px solid #7f9dc6;background:#fdfeff"></div>
<span class="abs" style="left:0;top:564px;width:41px;height:16px;line-height:16px;font-size:11px;text-align:right;color:#000">1</span>
<span class="abs" style="left:45px;top:564px;height:16px;line-height:16px;font-size:11px;color:#1f3a66;letter-spacing:0.25px">Din</span>
<span class="abs" style="left:72px;top:564px;height:16px;line-height:16px;font-size:11px;color:#1f3a66;letter-spacing:0.3px">25</span>
<svg class="ic" style="left:97px;top:566px" width="32" height="12" viewBox="0 0 32 12"><path d="M2.2 2 L6.6 5.7 L2.2 9.4 Z" fill="#27406b"/><path d="M20.2 2 L24.6 5.7 L20.2 9.4 Z" fill="#27406b"/><rect x="26" y="2.3" width="2" height="7" fill="#27406b"/></svg>
<svg class="ic" style="left:138px;top:566px" width="8" height="12" viewBox="0 0 8 12"><path d="M6.5 1 L1 5.7 L6.5 10.5 Z" fill="#4a5a7c"/></svg>
<div class="abs" style="left:150px;top:564px;width:123px;height:15px;box-sizing:border-box;border:1px solid #63728e;border-radius:2px;background:linear-gradient(#f0f3f8 0,#e1e6ef 6px,#cbd2e0 7px,#d3d9e6 13px)"></div>
<div class="abs" style="left:208px;top:568px;width:7px;height:8px;background-image:repeating-linear-gradient(to right,#6f7c96 0,#6f7c96 1px,rgba(255,255,255,.55) 1px,rgba(255,255,255,.55) 2px)"></div>
<!-- gap + white panel -->
<div class="abs" style="left:0;top:581px;width:650px;height:4px;background:#f4f5f7"></div>
<div class="abs" style="left:0;top:585px;width:650px;height:1px;background:#a5a5a5"></div>
<div class="abs" style="left:0;top:586px;width:650px;height:32px;background:#fff"></div>
<!-- tab bar -->
<div class="abs" style="left:0;top:618px;width:650px;height:2px;background:linear-gradient(#a5b4c6 0,#a5b4c6 1px,#bcc8d6 1px,#bcc8d6 2px)"></div>
<div class="abs" style="left:0;top:620px;width:650px;height:23px;background:linear-gradient(#f3f3f5,#ebebed)"></div>
<span class="abs" style="left:-1px;top:623px;height:16px;line-height:16px;font-size:12px;color:#36445f;white-space:pre;letter-spacing:0.12px">tiune Articole</span>
<div class="abs" style="left:0;top:643px;width:650px;height:1px;background:#9cabbd"></div>
<div class="abs" style="left:0;top:644px;width:650px;height:5px;background:linear-gradient(#d3e0f2,#c6d7ee)"></div>
<div class="abs" style="left:0;top:649px;width:650px;height:1px;background:#a3bad9"></div>

</div></body></html>
